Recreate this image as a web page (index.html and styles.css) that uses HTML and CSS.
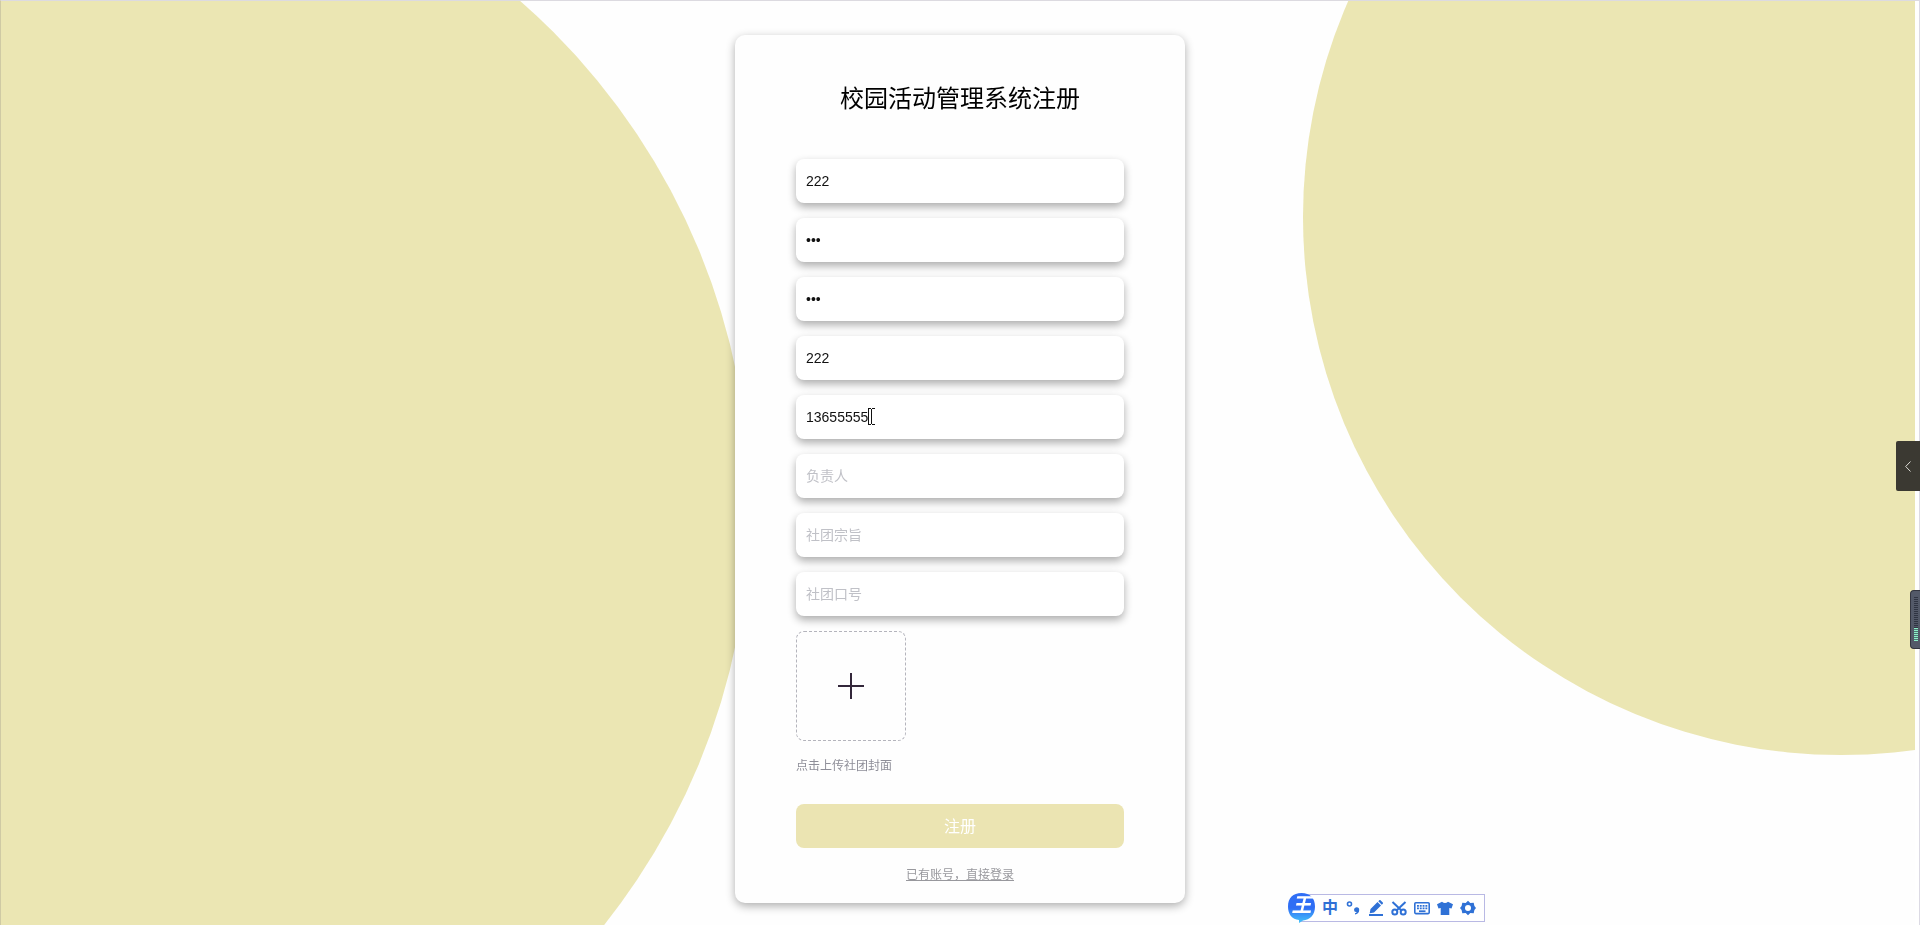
FILE: index.html
```html
<!DOCTYPE html>
<html lang="zh-CN">
<head>
<meta charset="utf-8">
<title>校园活动管理系统注册</title>
<link rel="stylesheet" href="styles.css">
</head>
<body>
<div class="backdrop" aria-hidden="true">
  <span class="disc disc-left"></span>
  <span class="disc disc-right"></span>
</div>
<main class="page">
  <form class="card">
    <h1 class="title">校园活动管理系统注册</h1>
    <div class="fields">
      <input class="field" type="text" value="222" aria-label="账号">
      <input class="field" type="password" value="222" aria-label="密码">
      <input class="field" type="password" value="222" aria-label="确认密码">
      <input class="field" type="text" value="222" aria-label="社团名称">
      <div class="field-wrap">
        <input class="field" type="text" value="13655555" aria-label="联系电话">
        <svg class="ibeam" viewBox="0 0 8 17" aria-hidden="true"><path d="M.5 1v15M0 .5h3M4 .5h3M0 16.5h3M4 16.5h3M3.500 1v15"/></svg>
      </div>
      <input class="field" type="text" placeholder="负责人" aria-label="负责人">
      <input class="field" type="text" placeholder="社团宗旨" aria-label="社团宗旨">
      <input class="field" type="text" placeholder="社团口号" aria-label="社团口号">
    </div>
    <button class="upload" type="button" aria-label="上传社团封面">
      <svg class="plus" viewBox="0 0 26 26" aria-hidden="true"><path d="M13 0v26M0 13h26"/></svg>
    </button>
    <p class="tip">点击上传社团封面</p>
    <button class="submit" type="submit">注册</button>
    <a class="login" href="#login">已有账号，直接登录</a>
  </form>
</main>
<div class="scroll-strip" aria-hidden="true"></div>
<button class="drawer" type="button" aria-label="展开">
  <svg class="chevron" viewBox="0 0 6 11" aria-hidden="true"><path d="M5.500.5.7 5.500l4.800 5"/></svg>
</button>
<div class="meter" aria-hidden="true"><span class="meter-idle"></span><span class="meter-live"></span></div>
<div class="ime">
  <span class="ime-logo">
    <svg class="ime-bubble" viewBox="0 0 27 30" aria-hidden="true">
      <defs><linearGradient id="bubble" x1="0" y1="0" x2="0" y2="1"><stop offset=".5" stop-color="#2f6ef5"/><stop offset="1" stop-color="#45c4fa"/></linearGradient></defs>
      <path d="M13.500 0C22 0 27 5 27 13.500S22 27 15 27.500L11 30V27C4 26.500 0 21 0 13.500 0 5 5 0 13.500 0z" fill="url(#bubble)"/>
    </svg>
    <span class="ime-name">王</span>
  </span>
  <span class="ime-mode">中</span>
  <svg class="ime-icon" viewBox="0 0 16 16"><circle cx="4.500" cy="4" r="2" fill="none" stroke="currentColor" stroke-width="1.600"/><path d="M9 9.800a2.600 2.600 0 1 1 5.200.2c0 2.400-1.500 4.200-4.200 4.600v-1.400c1-.2 1.600-.7 1.700-1.200A2.300 2.300 0 0 1 9 9.800z" fill="currentColor"/></svg>
  <svg class="ime-icon" viewBox="0 0 16 16"><path d="M1 14h14v2H1zM2.500 9 9.500 2l3.500 3.500-7 7-4.300.8zM10.300 1.200l1-1q.6-.5 1.200 0l2.300 2.300q.5.600 0 1.200l-1 1z" fill="currentColor"/></svg>
  <svg class="ime-icon" viewBox="0 0 16 16"><g fill="none" stroke="currentColor" stroke-width="2"><circle cx="3.800" cy="12" r="2.500"/><circle cx="12.200" cy="12" r="2.500"/><path d="M1.500 2 10.500 10.500M14.500 2 5.500 10.500"/></g></svg>
  <svg class="ime-icon" viewBox="0 0 16 16"><rect x=".8" y="2.800" width="14.400" height="10.800" rx="1" fill="none" stroke="currentColor" stroke-width="1.600"/><path d="M3 5.800h10.400M3 8.300h10.400" fill="none" stroke="currentColor" stroke-width="1.700" stroke-dasharray="1.900 .9"/><path d="M5 11.200h6.500" fill="none" stroke="currentColor" stroke-width="1.700"/></svg>
  <svg class="ime-icon" viewBox="0 0 16 16"><path d="M5 1.800q3 2.400 6 0l5 2.400-1.500 4.300-2.200-.5v7H3.700V8l-2.200.5L0 4.200z" fill="currentColor"/></svg>
  <svg class="ime-icon" viewBox="0 0 16 16"><path d="M8 .8 10.300 3l3.400-.2.700 3.200L16 8l-1.600 2-.7 3.200-3.400-.2L8 15.200 5.700 13l-3.400.2L1.600 10 0 8l1.600-2 .7-3.200 3.400.2z" fill="currentColor"/><circle cx="8" cy="8" r="3" fill="#fff"/></svg>
</div>
</body>
</html>
```
FILE: styles.css
```css
* { box-sizing: border-box; }

body {
  margin: 0;
  min-height: 100vh;
  overflow: hidden;
  background: #fefefe;
  font-family: "Liberation Sans", "Noto Sans CJK SC", sans-serif;
  color: #000;
}

.backdrop {
  position: fixed;
  inset: 0 5px 0 0;
  overflow: hidden;
  border-top: 1px solid #dcdae0;
  border-left: 1px solid #cfcaa4;
}

.disc {
  position: absolute;
  border-radius: 50%;
  background: #ebe6b3;
}

.disc-left {
  width: 1344px;
  height: 1344px;
  left: -595px;
  top: -166px;
}

.disc-right {
  width: 1076px;
  height: 1076px;
  right: -464px;
  top: -322px;
}

.page {
  position: relative;
  display: flex;
  justify-content: center;
  padding: 35px 0 20px;
}

.card {
  display: flex;
  flex-direction: column;
  width: 450px;
  padding: 46px 61px 18px;
  border-radius: 10px;
  background: #fefefe;
  box-shadow: 0 3px 10px rgba(0, 0, 0, 0.32);
}

.title {
  margin: 0 0 42px;
  font-size: 24px;
  line-height: 36px;
  font-weight: 400;
  text-align: center;
}

.fields {
  display: flex;
  flex-direction: column;
  gap: 15px;
}

.field-wrap { position: relative; display: flex; }

.field {
  width: 100%;
  height: 44px;
  padding: 0 10px 1px;
  border: 0;
  border-radius: 8px;
  outline: 0;
  background: #fff;
  box-shadow: 0 4px 9px rgba(0, 0, 0, 0.32);
  font-family: inherit;
  font-size: 14px;
  color: #111;
}

.field::placeholder {
  color: #c0c1c7;
  opacity: 1;
}

.ibeam {
  position: absolute;
  left: 72px;
  top: 13px;
  width: 8px;
  height: 17px;
  fill: none;
  stroke: #111;
}

.upload {
  display: flex;
  align-items: center;
  justify-content: center;
  width: 110px;
  height: 110px;
  margin: 15px 0;
  padding: 0;
  border: 1px dashed #b4b4bc;
  border-radius: 8px;
  background: none;
}

.plus {
  width: 26px;
  height: 26px;
  fill: none;
  stroke: #33273a;
  stroke-width: 2;
}

.tip {
  margin: 0 0 28px;
  font-size: 12px;
  line-height: 20px;
  color: #8e8e98;
}

.submit {
  height: 44px;
  padding: 0 0 3px;
  border: 0;
  border-radius: 8px;
  background: #ebe4b2;
  font-family: inherit;
  font-size: 16px;
  color: #fff;
}

.login {
  align-self: center;
  margin-top: 17px;
  font-size: 12px;
  line-height: 20px;
  color: #98989d;
}

.scroll-strip {
  position: fixed;
  inset: 0 0 0 auto;
  width: 5px;
  border-top: 1px solid #dcdae0;
  border-right: 1px solid #dcdae4;
  background: #fff;
}

.drawer {
  position: fixed;
  right: 0;
  top: 441px;
  display: flex;
  align-items: center;
  justify-content: center;
  width: 24px;
  height: 50px;
  padding: 0;
  border: 0;
  border-radius: 2px 0 0 2px;
  background: #3b3932;
}

.chevron {
  width: 6px;
  height: 11px;
  fill: none;
  stroke: #dddcd6;
}

.meter {
  position: fixed;
  right: 0;
  top: 590px;
  display: flex;
  flex-direction: column;
  width: 10px;
  height: 59px;
  padding: 6px 2px 7px 3px;
  border: 1px solid #33353f;
  border-right: 0;
  border-radius: 4px 0 0 4px;
  background: #535968;
}

.meter-idle {
  flex: 1;
  background: repeating-linear-gradient(#2f3442 0 1px, #535968 1px 2px);
}

.meter-live {
  height: 13px;
  background: repeating-linear-gradient(#8df0c8 0 1px, #4b7773 1px 2px);
}

.ime {
  position: fixed;
  left: 1300px;
  top: 894px;
  display: flex;
  align-items: center;
  gap: 7px;
  height: 28px;
  padding: 0 8px 0 0;
  border: 1px solid #b9b9e4;
  background: #fff;
  color: #2f71d6;
}

.ime-logo {
  display: grid;
  width: 27px;
  height: 30px;
  margin-left: -13px;
}

.ime-bubble,
.ime-name { grid-area: 1 / 1; }

.ime-bubble {
  width: 27px;
  height: 30px;
}

.ime-name {
  z-index: 1;
  font-size: 20px;
  font-weight: 700;
  font-style: italic;
  line-height: 24px;
  text-align: center;
  color: #fff;
}

.ime-mode {
  width: 16px;
  font-size: 16px;
  font-weight: 700;
  line-height: 24px;
}

.ime-icon { width: 16px; height: 16px; }
```
